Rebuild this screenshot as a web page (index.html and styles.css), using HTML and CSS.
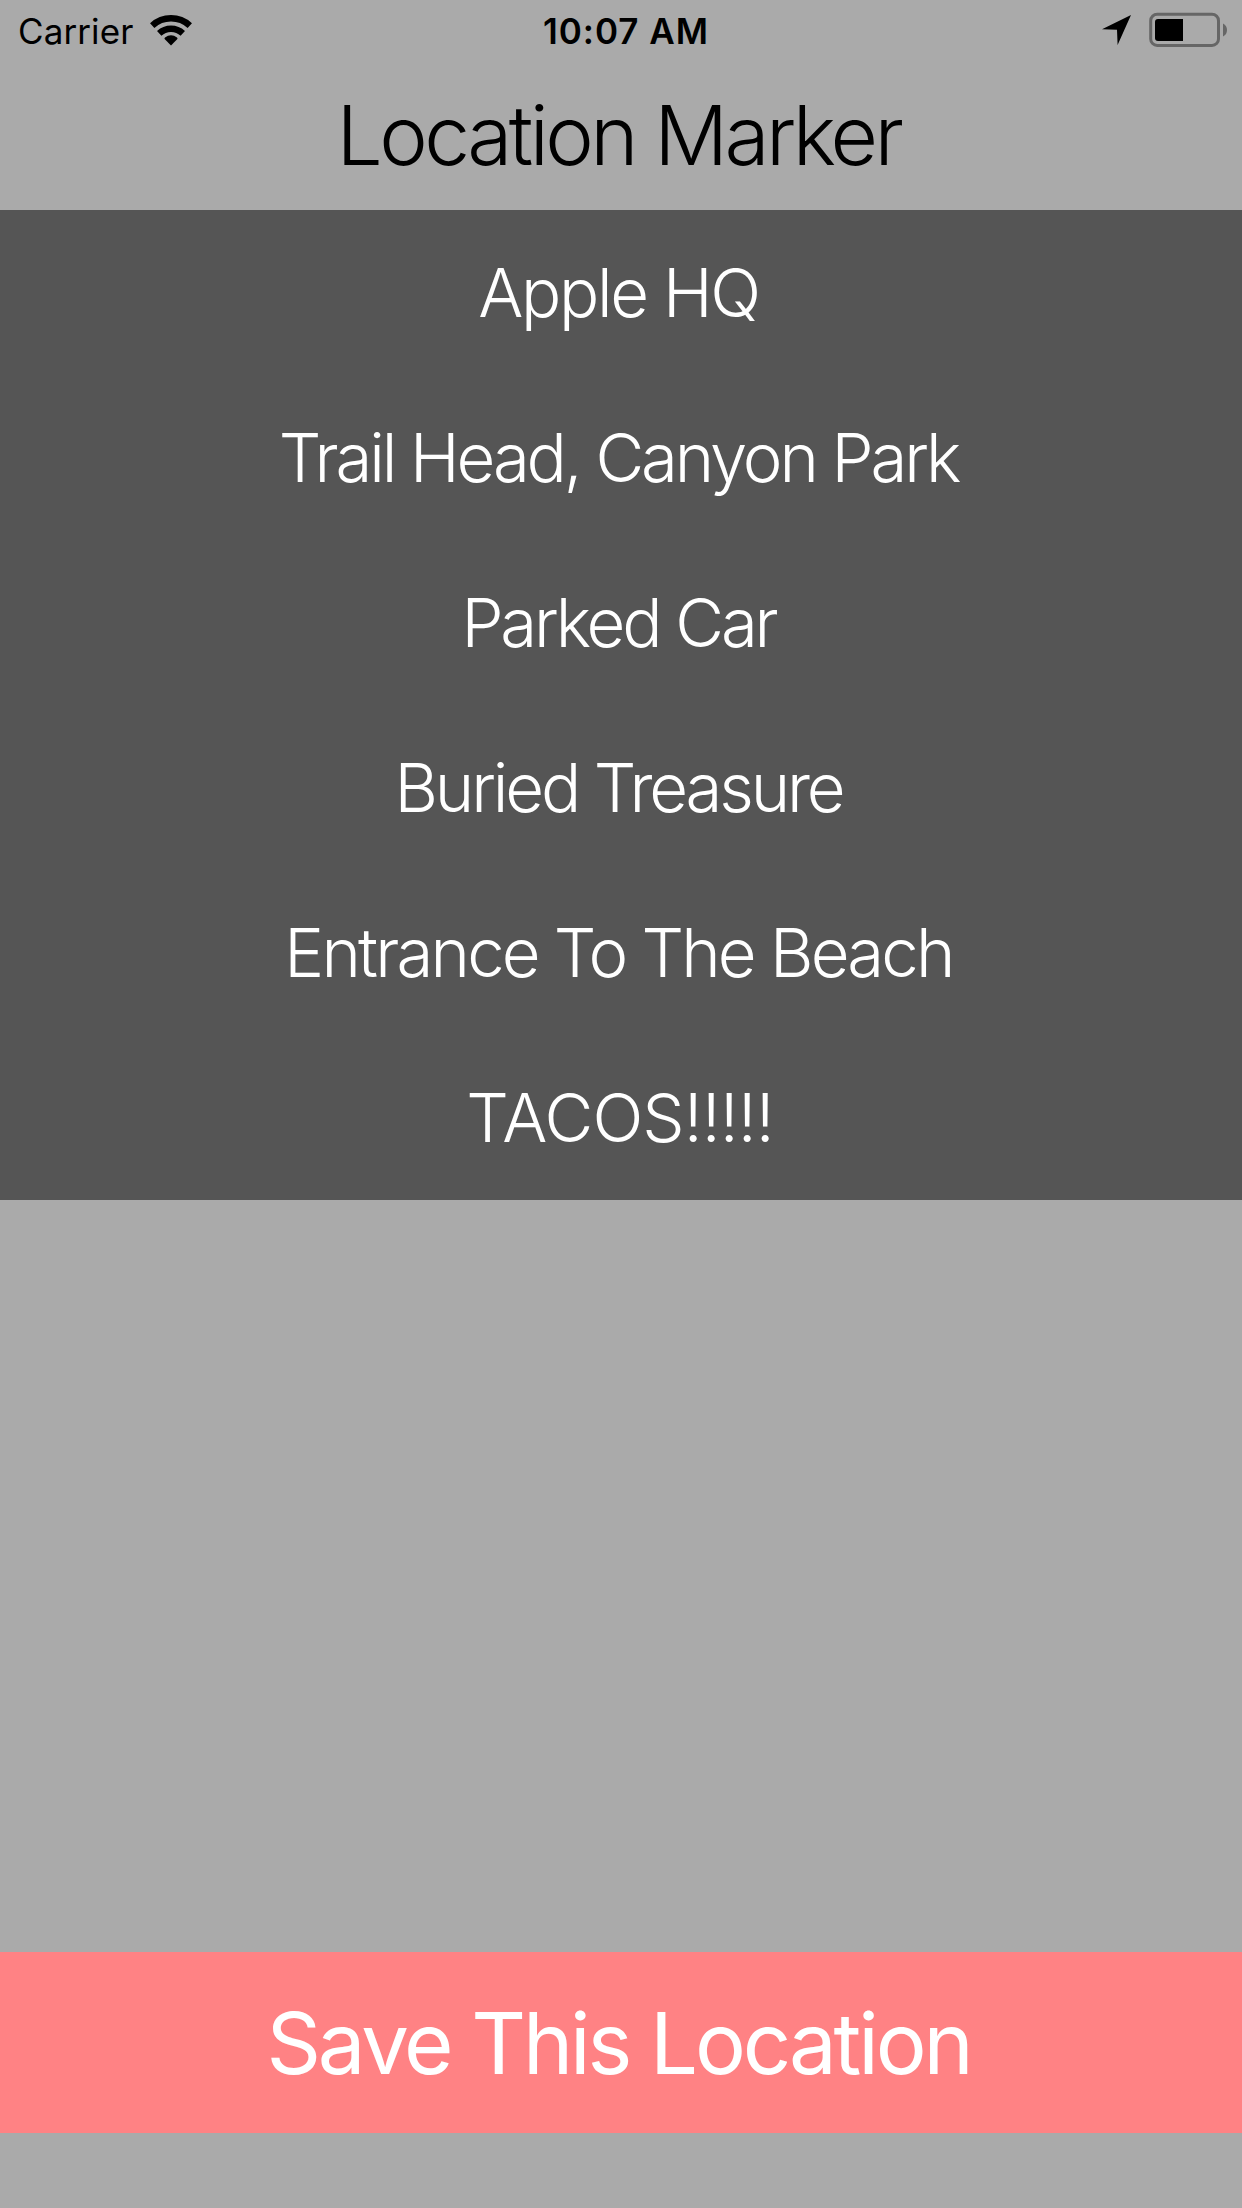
FILE: index.html
```html
<!DOCTYPE html>
<html lang="en">
<head>
<meta charset="utf-8">
<title>Location Marker</title>
<link rel="stylesheet" href="styles.css">
</head>
<body>
<div class="status">
  <div class="status-left"><span class="carrier">Carrier</span>
    <svg class="wifi" viewBox="0 0 42 31" width="42" height="31"><path d="M21 30.4 L14.6 24 Q14.2 23.2 15 22.5 A10 10 0 0 1 27 22.5 Q27.8 23.2 27.4 24 Z"/><path class="arc" d="M9.2 18.4 A17.3 17.3 0 0 1 32.8 18.4 M2.2 10.6 A27.8 27.8 0 0 1 39.8 10.6"/></svg>
  </div>
  <div class="time">10:07 AM</div>
  <div class="status-right">
    <svg class="arrow" viewBox="0 0 29 30" width="29" height="30"><path d="M29 0 L15.6 30 L15 14.8 L0 14.3 Z"/></svg>
    <svg class="battery" viewBox="0 0 78 36" width="78" height="36"><rect class="shell" x="1.7" y="2.2" width="67.8" height="31.2" rx="6.5"/><path d="M34 7 V29 H9 Q6 29 6 26 V10 Q6 7 9 7 Z"/><path class="cap" d="M74 11.5 Q78 13.5 78 18 Q78 22.5 74 24.5 Z"/></svg>
  </div>
</div>
<h1 class="title">Location Marker</h1>
<ul class="list">
  <li class="r1">Apple HQ</li>
  <li>Trail Head, Canyon Park</li>
  <li>Parked Car</li>
  <li class="r4">Buried Treasure</li>
  <li class="r5">Entrance To The Beach</li>
  <li class="r6">TACOS!!!!!</li>
</ul>
<button class="save">Save This Location</button>
</body>
</html>
```
FILE: styles.css
```css
* { box-sizing: border-box; margin: 0; padding: 0; }
body { height: 2208px; display: flex; flex-direction: column; background: #aaa; font-family: Inter, "Liberation Sans", sans-serif; overflow: hidden; }
.status { height: 60px; display: grid; grid-template-columns: 1fr auto 1fr; align-items: center; padding: 0 15px 0 18px; font-size: 35px; }
.status-left, .status-right { display: flex; align-items: center; gap: 18px; }
.status-right { justify-content: flex-end; }
.carrier { padding-top: 2px; letter-spacing: 0.1px; margin-right: -1px; }
.time { font-weight: 580; padding: 2px 0 0 7px; letter-spacing: 1px; }
.arc { fill: none; stroke: #000; stroke-width: 6.4; }
.shell { fill: none; stroke: #666; stroke-width: 3; }
.cap { fill: #666; }
.title { height: 150px; line-height: 152px; padding-right: 5px; text-align: center; font-size: 82px; font-weight: 330; letter-spacing: -3.6px; }
.list { height: 990px; background: #555; color: #fff; list-style: none; }
.list li { height: 165px; line-height: 165px; padding-right: 5px; text-align: center; font-size: 67px; font-weight: 330; letter-spacing: -3.1px; }
.list .r1 { letter-spacing: -2.4px; }
.list .r4 { letter-spacing: -3.15px; }
.list .r5 { letter-spacing: -2.8px; }
.list .r6 { letter-spacing: -0.9px; padding-right: 2px; }
.save { margin-top: auto; margin-bottom: 75px; height: 181px; padding: 2px 5px 0 0; border: 0; background: #ff8284; color: #fff; font: 400 85px Inter, "Liberation Sans", sans-serif; letter-spacing: -3.15px; }
```
